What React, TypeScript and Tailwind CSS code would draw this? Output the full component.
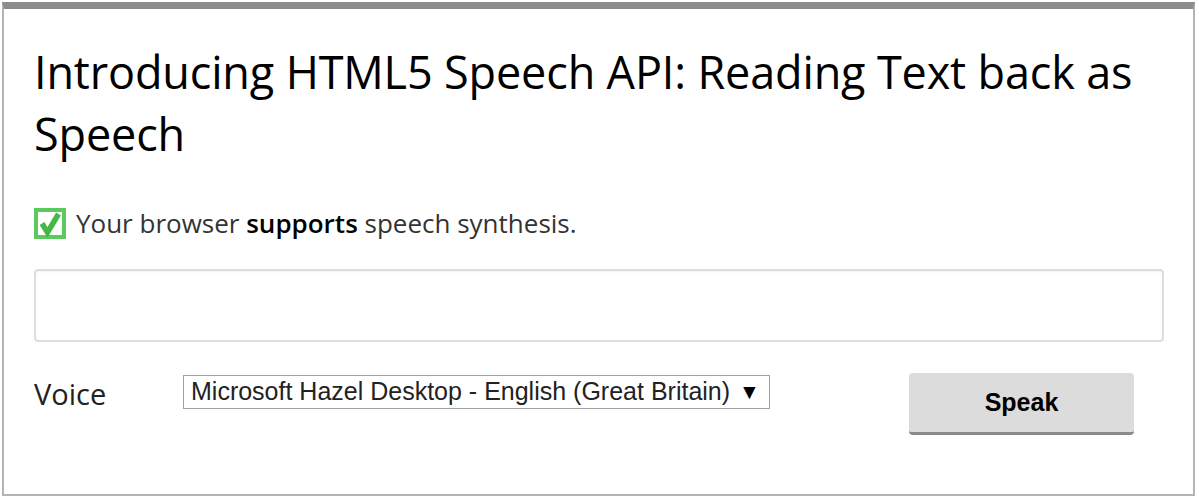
export default function App() {
  return (
    <div className="h-[500px] w-[1199px] bg-white pl-[2px] pt-[2px]">
      <div className="h-[494px] w-[1193px] border-x-2 border-b-2 border-t-[7px] border-[#b4b4b4] border-t-[#8c8c8c] pl-[30px] pr-[29px]">
        {/* Title */}
        <h1 className="mt-[32px] font-['Open_Sans',sans-serif] text-[45px] leading-[62px] tracking-[-0.15px] text-black whitespace-nowrap">
          Introducing HTML5 Speech API: Reading Text back as
          <br />
          Speech
        </h1>

        {/* Support status */}
        <div className="mt-[42px] flex h-[32px] items-center gap-[10px]">
          <svg width="32" height="31" viewBox="0 0 32 31" className="shrink-0">
            <rect x="2" y="2" width="28" height="27" fill="white" stroke="#5cc95c" strokeWidth="4" />
            <polyline
              points="8,15.5 13.5,24.5 24.5,6"
              fill="none"
              stroke="#44b844"
              strokeWidth="5.5"
              strokeLinejoin="miter"
              strokeLinecap="butt"
            />
          </svg>
          <p className="font-['Open_Sans',sans-serif] text-[26px] text-[#333]">
            Your browser <strong className="font-semibold text-black">supports</strong> speech synthesis.
          </p>
        </div>

        {/* Text to speak */}
        <div className="mt-[30px] h-[73px] w-full rounded-[4px] border-2 border-[#dedede] bg-white shadow-[inset_0_1px_2px_rgba(0,0,0,0.06)]" />

        {/* Voice + Speak */}
        <div className="mt-[31px] flex items-start">
          <label className="mt-[2px] w-[149px] font-['Open_Sans',sans-serif] text-[29px] leading-[38px] text-[#222]">
            Voice
          </label>
          <div className="mt-[2px] flex h-[34px] w-[587px] items-center border border-[#a0a0a0] bg-white pl-[7px] font-['Liberation_Sans',Arial,sans-serif] text-[25px] text-[#222]">
            Microsoft Hazel Desktop - English (Great Britain)
            <span className="ml-[9px] text-[21px] text-black">▼</span>
          </div>
          <button className="ml-[139px] h-[62px] w-[225px] rounded-[4px] border-b-[3px] border-[#8a8a8a] bg-[#dcdcdc] font-['Liberation_Sans',Arial,sans-serif] text-[25px] font-bold text-black">
            Speak
          </button>
        </div>
      </div>
    </div>
  );
}
